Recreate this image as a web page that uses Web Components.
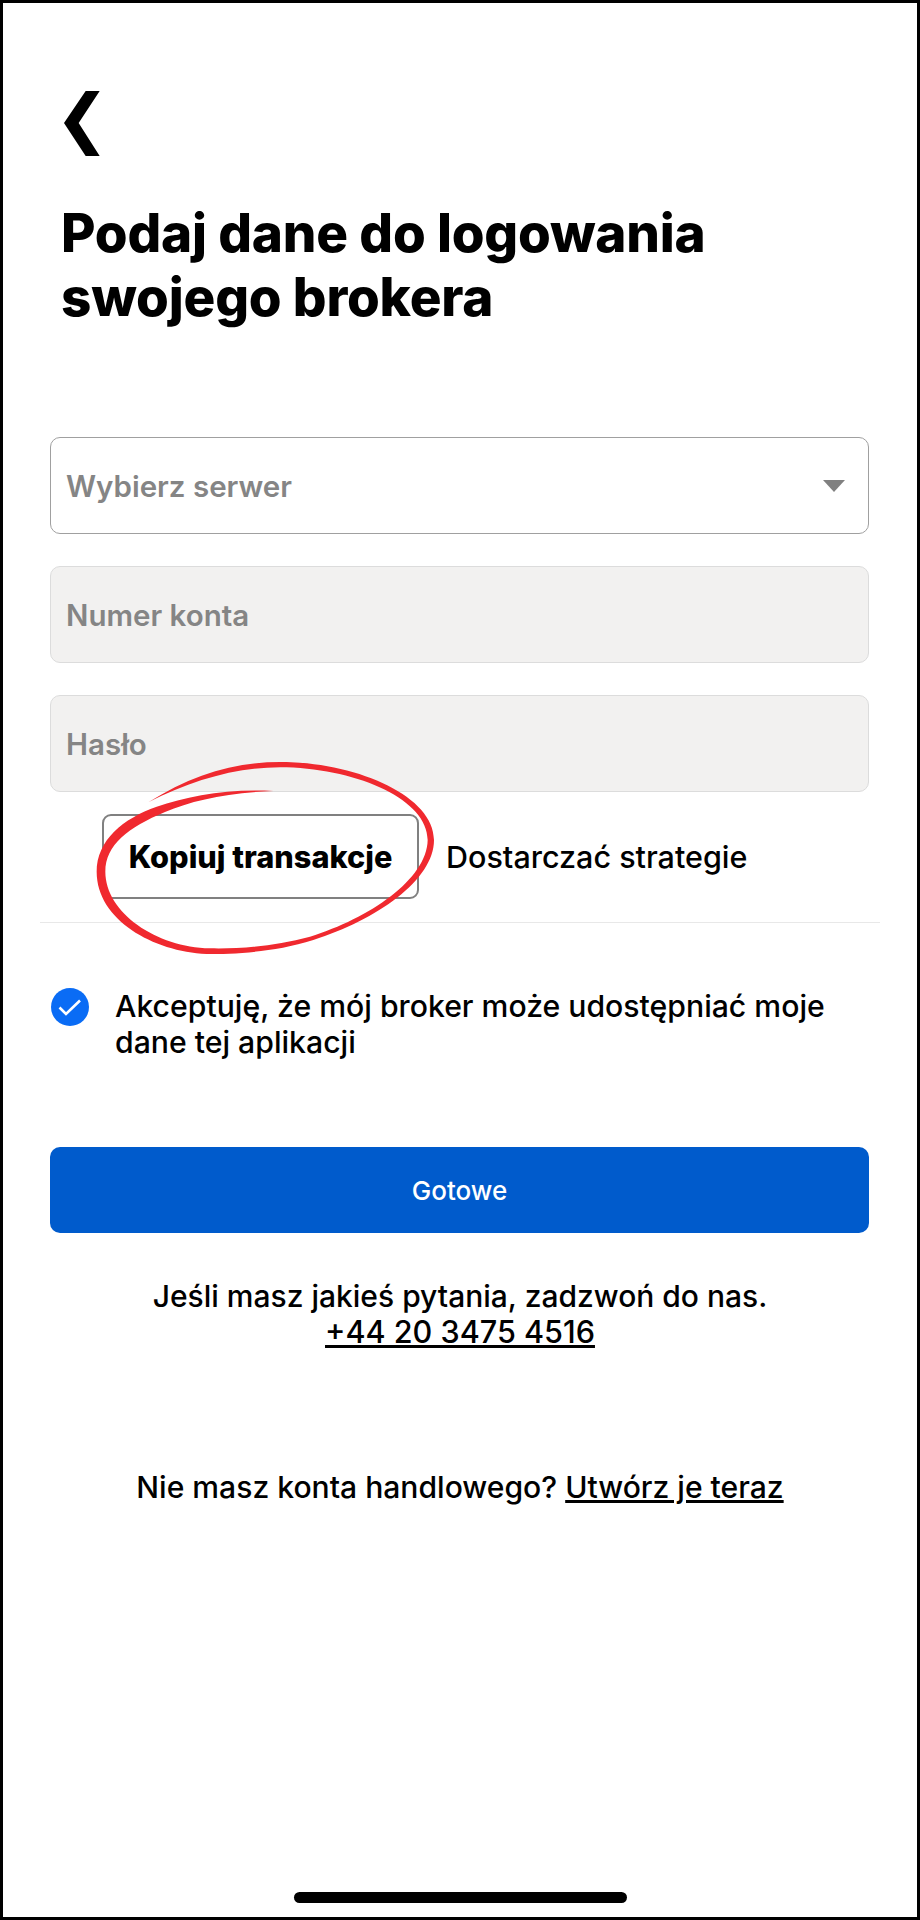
<!DOCTYPE html>
<html lang="pl">
<head>
<meta charset="utf-8">
<title>Logowanie brokera</title>
<style>
  html, body { margin: 0; background: #fff; }
</style>
</head>
<body>
<broker-screen>
  <back-button></back-button>
  <h-title>Podaj dane do logowania<br>swojego brokera</h-title>
  <form-field kind="select" label="Wybierz serwer"></form-field>
  <form-field label="Numer konta"></form-field>
  <form-field label="Hasło"></form-field>
  <mode-tabs></mode-tabs>
  <accept-row>Akceptuję, że mój broker może udostępniać moje dane tej aplikacji</accept-row>
  <primary-button>Gotowe</primary-button>
  <help-note></help-note>
  <home-bar></home-bar>
</broker-screen>

<script>
class BrokerScreen extends HTMLElement {
  constructor() {
    super();
    this.attachShadow({ mode: 'open' });
    this.shadowRoot.innerHTML = `
      <style>
        :host {
          display: flex;
          flex-direction: column;
          box-sizing: border-box;
          width: 920px;
          height: 1920px;
          border: 3px solid #000;
          background: #fff;
          color: #000;
          font-family: Inter, "Liberation Sans", sans-serif;
        }
      </style>
      <slot></slot>
    `;
  }
}

class BackButton extends HTMLElement {
  constructor() {
    super();
    this.attachShadow({ mode: 'open' });
    this.shadowRoot.innerHTML = `
      <style>
        :host { display: block; margin: 88px 0 0 61px; height: 65px; }
        svg { display: block; }
      </style>
      <svg width="36" height="65" viewBox="0 0 108 195">
        <polygon points="107,0 65,0 0,96 65,195 107,195 44,96" fill="#000"/>
      </svg>
    `;
  }
}

class HTitle extends HTMLElement {
  constructor() {
    super();
    this.attachShadow({ mode: 'open' });
    this.shadowRoot.innerHTML = `
      <style>
        :host {
          display: block;
          margin: 45px 0 0 58px;
          font-size: 53px;
          line-height: 64px;
          font-weight: 800;
          letter-spacing: -0.2px;
        }
      </style>
      <slot></slot>
    `;
  }
}

class FormField extends HTMLElement {
  constructor() {
    super();
    this.attachShadow({ mode: 'open' });
  }

  connectedCallback() {
    const select = this.getAttribute('kind') === 'select';
    this.shadowRoot.innerHTML = `
      <style>
        :host {
          display: block;
          margin: 32px 48px 0 47px;
        }
        :host([kind="select"]) { margin-top: 108px; }
        .box {
          box-sizing: border-box;
          height: 97px;
          display: flex;
          align-items: center;
          justify-content: space-between;
          padding: 0 23px 0 15px;
          border-radius: 10px;
          border: 1.5px solid #dcdcdc;
          background: #f2f1f0;
          color: #858585;
          font-size: 29.5px;
          font-weight: 600;
        }
        .select { background: #fff; border-color: #a0a0a0; }
        .arrow { width: 22px; height: 12px; fill: #808080; }
      </style>
      <div class="box ${select ? 'select' : ''}">
        <span>${this.getAttribute('label')}</span>
        ${select ? '<svg class="arrow" viewBox="0 0 22 12"><polygon points="0,0 22,0 11,12"/></svg>' : ''}
      </div>
    `;
  }
}

class ModeTabs extends HTMLElement {
  constructor() {
    super();
    this.attachShadow({ mode: 'open' });
    this.shadowRoot.innerHTML = `
      <style>
        :host {
          display: block;
          position: relative;
          margin-top: 22px;
          font-size: 30.5px;
        }
        .tabs {
          display: flex;
          align-items: center;
          padding-bottom: 23px;
          margin: 0 37px;
          border-bottom: 1.5px solid #e8e8e8;
          padding-left: 62px;
        }
        .tab {
          box-sizing: border-box;
          height: 85px;
          display: flex;
          align-items: center;
          justify-content: center;
        }
        .active {
          width: 317px;
          border: 2px solid #808080;
          border-radius: 9px;
          font-size: 30.7px;
          font-weight: 800;
        }
        .other { margin-left: 27px; font-weight: 500; }
        svg {
          position: absolute;
          left: 57px;
          top: -74px;
          pointer-events: none;
        }
      </style>
      <div class="tabs">
        <div class="tab active">Kopiuj transakcje</div>
        <div class="tab other">Dostarczać strategie</div>
      </div>
      <svg width="400" height="220" viewBox="0 0 1200 660">
        <path fill="#f0292f" d="M265 187 C400 100 540 62 680 66 C900 72 1122 170 1122 300 C1122 420 950 540 760 600 C640 638 520 642 440 642 C280 634 110 540 110 395 C110 300 190 235 290 200 C380 170 500 145 640 153 C500 158 395 182 315 216 C205 262 136 315 136 395 C136 518 290 622 450 625 C530 627 640 620 750 590 C928 535 1101 418 1103 300 C1103 180 900 90 680 82 C540 78 400 118 265 187 Z"/>
      </svg>
    `;
  }
}

class AcceptRow extends HTMLElement {
  constructor() {
    super();
    this.attachShadow({ mode: 'open' });
    this.shadowRoot.innerHTML = `
      <style>
        :host {
          display: flex;
          gap: 26px;
          margin: 65px 40px 0 48px;
          font-size: 30.2px;
          line-height: 36px;
          font-weight: 500;
          min-height: 72px;
        }
        svg { flex: none; display: block; }
      </style>
      <svg width="38" height="38" viewBox="0 0 38 38">
        <circle cx="19" cy="19" r="19" fill="#0a6cf5"/>
        <path d="M8.5 19.5 L15 26 L29 12.5" fill="none" stroke="#fff" stroke-width="2.6"/>
      </svg>
      <div><slot></slot></div>
    `;
  }
}

class PrimaryButton extends HTMLElement {
  constructor() {
    super();
    this.attachShadow({ mode: 'open' });
    this.shadowRoot.innerHTML = `
      <style>
        :host {
          display: flex;
          align-items: center;
          justify-content: center;
          height: 86px;
          margin: 87px 48px 0 47px;
          border-radius: 10px;
          background: #005bcc;
          color: #fff;
          font-size: 26px;
          font-weight: 500;
        }
      </style>
      <slot></slot>
    `;
  }
}

class HelpNote extends HTMLElement {
  constructor() {
    super();
    this.attachShadow({ mode: 'open' });
    this.shadowRoot.innerHTML = `
      <style>
        :host {
          display: block;
          margin-top: 45px;
          text-align: center;
          font-size: 30px;
          line-height: 36px;
          font-weight: 500;
        }
        p { margin: 0; }
        .phone { font-size: 30.6px; }
        .signup { margin-top: 119px; font-size: 30.1px; }
      </style>
      <p>Jeśli masz jakieś pytania, zadzwoń do nas.<br><u class="phone">+44 20 3475 4516</u></p>
      <p class="signup">Nie masz konta handlowego? <u>Utwórz je teraz</u></p>
    `;
  }
}

class HomeBar extends HTMLElement {
  constructor() {
    super();
    this.attachShadow({ mode: 'open' });
    this.shadowRoot.innerHTML = `
      <style>
        :host {
          display: block;
          width: 333px;
          height: 11px;
          margin: auto auto 14px auto;
          border-radius: 6px;
          background: #000;
        }
      </style>
    `;
  }
}

customElements.define('broker-screen', BrokerScreen);
customElements.define('back-button', BackButton);
customElements.define('h-title', HTitle);
customElements.define('form-field', FormField);
customElements.define('mode-tabs', ModeTabs);
customElements.define('accept-row', AcceptRow);
customElements.define('primary-button', PrimaryButton);
customElements.define('help-note', HelpNote);
customElements.define('home-bar', HomeBar);
</script>
</body>
</html>
